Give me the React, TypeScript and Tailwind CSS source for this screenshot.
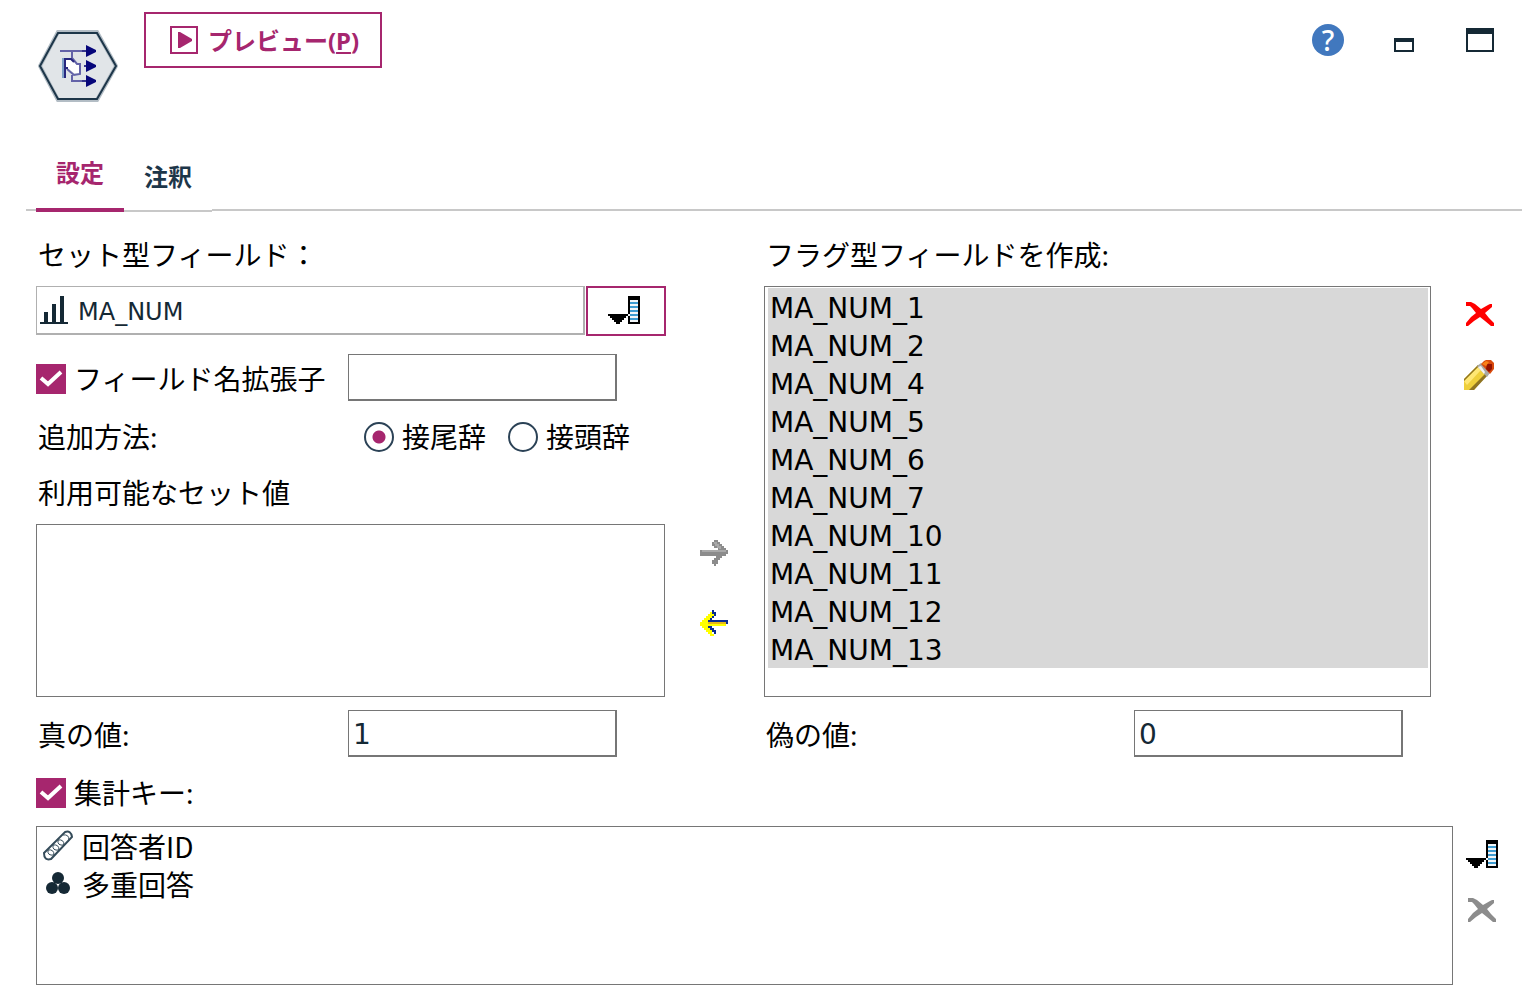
import { useState, type ReactNode } from "react";

const flagFields = [
  "MA_NUM_1",
  "MA_NUM_2",
  "MA_NUM_4",
  "MA_NUM_5",
  "MA_NUM_6",
  "MA_NUM_7",
  "MA_NUM_10",
  "MA_NUM_11",
  "MA_NUM_12",
  "MA_NUM_13",
];

function NodeIcon() {
  return (
    <svg width="80" height="72" viewBox="0 0 80 72" fill="none" aria-hidden="true">
      <path d="M20 2H59L78 36L59 70H20L2 36Z" fill="#e1e5e8" stroke="#b3bdc5" strokeWidth="4" />
      <path d="M20 3H59L78 36L59 69H20L2 36Z" stroke="#1d3649" strokeWidth="2" />
      <path d="M27 30H33L38 34H42V43H36L31 39H27Z" fill="#fff" />
      <path d="M22 21H47M34 22V28L39 34H42V44L36 45L29 39M34 45V51H48" stroke="#6363a8" strokeWidth="2" />
      <path d="M25 28V48" stroke="#7fa0c8" strokeWidth="2" />
      <path d="M27 28V48" stroke="#28287f" strokeWidth="2" />
      <path d="M26 29H33L36 32M27 38H30" stroke="#28287f" strokeWidth="2" />
      <path d="M46 36H52M44 21H50M44 51H50" stroke="#35358c" strokeWidth="2" />
      <path d="M48 15L58 20V22L48 27ZM48 30L58 35V37L48 42ZM48 45L58 50V52L48 57Z" fill="#06067a" />
    </svg>
  );
}

function FieldPickerIcon() {
  return (
    <svg width="32" height="28" viewBox="0 0 32 28" shapeRendering="crispEdges" aria-hidden="true">
      <path d="M0 18H20V20H18V22H16V24H14V26H12V28H8V26H6V24H4V22H2V20H0Z" fill="#000" />
      <path d="M20 0H32V28H20Z" fill="#000" />
      <path d="M22 4H30V26H22ZM18 20H20V18H22V20H20V22H18Z" fill="#f2f6f8" />
      <path d="M22 6H30V8H22ZM22 10H30V12H22ZM22 14H30V16H22ZM22 18H30V20H22ZM22 22H30V24H22Z" fill="#3c9bd0" />
    </svg>
  );
}

function CrossIcon({ color }: { color: string }) {
  return (
    <svg width="28" height="24" viewBox="0 0 28 24" aria-hidden="true">
      <path
        d="M0 0H5L9 2L15 7L22 3L24 2H26V5L19 11L23 16L28 21V24H25L19 19L14 15L8 19L2 24H0V21L5 15L10 11L6 6L4 4H0Z"
        fill={color}
      />
    </svg>
  );
}

function PencilIcon() {
  return (
    <svg width="30" height="30" viewBox="0 0 30 30" aria-hidden="true">
      <path d="M0 19L14 5L23 14L10 30H0Z" fill="#efcf3b" />
      <path d="M0 21L14 7L17 10L3 25Z" fill="#ffe774" />
      <path d="M0 19L14 5L15 6L0 21ZM10 30L24 15L22 13L5 30Z" fill="#8f7421" />
      <path d="M13 6L17 3L26 13L23 17Z" fill="#a9a9a5" />
      <path d="M14 7L17 6L21 12L20 14Z" fill="#f3f3f3" />
      <path d="M17 4L20 1L22 0H27L30 3V9L26 14Z" fill="#d84a0d" />
      <path d="M23 4L28 4L28 9L25 12L22 9Z" fill="#941200" />
      <path d="M18 4L22 1L25 2L22 6Z" fill="#f98219" />
    </svg>
  );
}

function RightArrowIcon() {
  return (
    <svg width="28" height="26" viewBox="0 0 28 26" shapeRendering="crispEdges" aria-hidden="true">
      <path
        d="M0 10H18V8H14V6H12V2H14V0H18V2H20V4H22V6H24V8H26V10H28V14H26V16H22V18H20V20H18V24H16V26H14V24H12V20H14V18H16V16H0Z"
        fill="#8c8c8c"
      />
      <path d="M2 11H26M14 3H16V5H18V7H20V9" stroke="#a9a9a9" strokeWidth="2" fill="none" />
    </svg>
  );
}

function LeftArrowIcon() {
  return (
    <svg width="28" height="26" viewBox="0 0 28 26" shapeRendering="crispEdges" aria-hidden="true">
      <path
        d="M0 12H2V10H4V8H6V6H8V4H10V2H12V4H14V6H12V8H10V10H8V12H26V16H8V18H10V20H12V24H14V26H10V24H8V22H6V20H4V18H2V16H0Z"
        fill="#ffff00"
      />
      <path
        d="M12 0H14V2H16V6H14V4H12ZM12 6H14V8H12ZM10 8H12V10H10ZM8 10H28V14H26V12H8ZM8 16H12V18H14V20H16V24H14V22H12V20H10V18H8Z"
        fill="#082b91"
      />
      <path d="M8 12H26V14H8Z" fill="#e7b718" />
    </svg>
  );
}

function Tick() {
  return (
    <svg className="pointer-events-none col-start-1 row-start-1" width="30" height="30" viewBox="0 0 30 30" aria-hidden="true">
      <path d="M5 14L12 20L25 8" fill="none" stroke="#fff" strokeWidth="4" />
    </svg>
  );
}

function CheckField({ children }: { children: ReactNode }) {
  const [checked, setChecked] = useState(true);
  return (
    <label className="flex items-center gap-2">
      <span className="grid">
        <input
          type="checkbox"
          checked={checked}
          onChange={() => setChecked(!checked)}
          className="col-start-1 row-start-1 size-[30px] appearance-none border-2 border-[#a6266e] bg-white checked:bg-[#a6266e]"
        />
        {checked && <Tick />}
      </span>
      {children}
    </label>
  );
}

function RadioField({ label, checked, onChange }: { label: string; checked: boolean; onChange: () => void }) {
  return (
    <label className="flex items-center gap-2">
      <input
        type="radio"
        name="affix"
        checked={checked}
        onChange={onChange}
        className="size-[30px] appearance-none rounded-full border-2 border-[#2b4256] bg-white checked:bg-[radial-gradient(circle,#a6266e_6px,#fff_7px)]"
      />
      {label}
    </label>
  );
}

const textBox =
  "h-[47px] w-[269px] border-t border-r-2 border-b-2 border-l border-[#767676] bg-white px-1 pt-[2px] font-['DejaVu_Sans',sans-serif] text-[#152935] outline-none";

export default function App() {
  const [affix, setAffix] = useState("suffix");
  return (
    <main className="bg-white pb-3 font-['Noto_Sans','Noto_Sans_CJK_JP',sans-serif] text-[28px] leading-[38px] text-black">
      <header className="flex h-[140px] items-start pt-3 pr-11 pl-[38px]">
        <div className="pt-[18px]">
          <NodeIcon />
        </div>
        <button className="ml-[26px] flex h-14 w-[238px] items-center justify-center gap-[10px] border-2 border-[#a6266e] pl-[3px] text-2xl font-bold text-[#a6266e]">
          <svg width="28" height="28" viewBox="0 0 28 28" aria-hidden="true">
            <path d="M1 1H27V27H1Z" fill="none" stroke="#a6266e" strokeWidth="2" />
            <path d="M8 6H10L22 13V15L10 22H8Z" fill="#a6266e" />
          </svg>
          <span className="pt-[2px]">
            プレビュー(<u className="underline-offset-2">P</u>)
          </span>
        </button>
        <div className="ml-auto flex items-center pt-3">
          <button aria-label="ヘルプ" className="size-8 rounded-full bg-[#4178be] text-center text-[28px] leading-[30px] font-medium text-white">
            ?
          </button>
          <button aria-label="最小化" className="ml-[50px] pt-[10px]">
            <span className="block h-[14px] w-5 border-2 border-t-4 border-[#152935]" />
          </button>
          <button aria-label="最大化" className="ml-[52px]">
            <span className="block h-6 w-7 border-2 border-t-[6px] border-[#152935]" />
          </button>
        </div>
      </header>

      <nav className="mr-4 ml-[26px] flex h-[72px] text-2xl font-bold" role="tablist">
        <span className="mb-[1px] w-[10px] border-b-2 border-[#c8c8c8]" />
        <button role="tab" aria-selected="true" className="w-[88px] border-b-4 border-[#a6266e] pb-[2px] text-[#a6266e]">
          設定
        </button>
        <button role="tab" aria-selected="false" className="w-[88px] border-b-2 border-[#c8c8c8] pt-1 text-[#1d3649]">
          注釈
        </button>
        <span className="mb-[1px] flex-1 border-b-2 border-[#c8c8c8]" />
      </nav>

      <div className="flex pt-6 pr-10 pl-9">
        <section className="w-[630px]">
          <h2 className="pl-[2px]">セット型フィールド：</h2>
          <div className="mt-3 flex h-[50px]">
            <div className="flex h-[49px] flex-1 items-center gap-[10px] border-t border-r-2 border-b-2 border-l border-[#b0b0b0] pl-[3px] text-2xl text-[#152935]">
              <svg width="28" height="28" viewBox="0 0 28 28" fill="#152935" aria-hidden="true">
                <path d="M0 26H28V28H0ZM4 16H8V26H4ZM12 8H16V26H12ZM20 0H24V26H20Z" />
              </svg>
              <span className="pt-1 font-['DejaVu_Sans',sans-serif]">MA_NUM</span>
            </div>
            <button aria-label="フィールドの選択" className="ml-[1px] flex w-20 items-center justify-center border-2 border-[#a6266e] pr-1 pb-[2px]">
              <FieldPickerIcon />
            </button>
          </div>
          <div className="mt-[18px] flex h-[47px] items-center justify-between pr-[49px]">
            <div className="pt-[2px]">
              <CheckField>フィールド名拡張子</CheckField>
            </div>
            <input aria-label="フィールド名拡張子" className={textBox} />
          </div>
          <div className="mt-4 flex h-10 items-center">
            <span className="w-[328px] pl-[2px]">追加方法:</span>
            <div className="flex gap-[22px]">
              <RadioField label="接尾辞" checked={affix === "suffix"} onChange={() => setAffix("suffix")} />
              <RadioField label="接頭辞" checked={affix === "prefix"} onChange={() => setAffix("prefix")} />
            </div>
          </div>
          <h2 className="mt-[17px] pl-[2px]">利用可能なセット値</h2>
          <div role="listbox" aria-label="利用可能なセット値" className="mt-3 mr-[1px] h-[173px] border border-[#767676]" />
          <label className="mt-[13px] flex items-center justify-between pr-[49px] pl-[2px]">
            <span className="pt-[2px]">真の値:</span>
            <input defaultValue="1" className={textBox} />
          </label>
        </section>

        <div className="flex w-[98px] flex-col items-center gap-11 pt-[304px] pr-[2px]">
          <button aria-label="追加">
            <RightArrowIcon />
          </button>
          <button aria-label="戻す">
            <LeftArrowIcon />
          </button>
        </div>

        <section className="flex-1">
          <h2 className="pl-[2px]">フラグ型フィールドを作成:</h2>
          <div className="mt-3 flex">
            <ul
              role="listbox"
              aria-label="フラグ型フィールド"
              className="h-[411px] flex-1 border border-[#767676] pt-[1px] pr-[2px] pl-[3px] font-['DejaVu_Sans',sans-serif] leading-[34px]"
            >
              {flagFields.map((name) => (
                <li key={name} role="option" aria-selected="true" className="bg-[#d8d8d8] pt-1 pl-[2px]">
                  {name}
                </li>
              ))}
            </ul>
            <div className="flex w-[67px] flex-col items-end gap-[34px] pt-4">
              <button aria-label="削除" className="pr-1">
                <CrossIcon color="#ff0000" />
              </button>
              <button aria-label="編集" className="pr-1">
                <PencilIcon />
              </button>
            </div>
          </div>
          <label className="mt-[13px] flex items-center justify-between pr-[95px] pl-[2px]">
            <span className="pt-[2px]">偽の値:</span>
            <input defaultValue="0" className={textBox} />
          </label>
        </section>
      </div>

      <section className="pt-[17px] pr-10 pl-9">
        <CheckField>集計キー:</CheckField>
        <div className="mt-[14px] flex">
          <ul
            role="listbox"
            aria-label="集計キー"
            className="h-[159px] flex-1 border border-[#767676] pl-[5px] font-['Noto_Sans_CJK_JP',sans-serif]"
          >
            <li role="option" aria-selected="false" className="flex items-center gap-2">
              <svg width="32" height="32" viewBox="0 0 32 32" fill="none" stroke="#344b59" strokeWidth="2" aria-hidden="true">
                <path d="M2 23L23 2Q29 0 30 7L9 29Q2 31 2 23Z" />
                <path
                  d="M6 20Q12 19 12 25M11 15Q17 14 17 20M16 10Q22 9 22 15M21 5Q27 4 27 10M6 20Q5 26 12 25M11 15Q10 21 17 20M16 10Q15 16 22 15"
                  strokeWidth="1"
                />
              </svg>
              回答者ID
            </li>
            <li role="option" aria-selected="false" className="flex items-center gap-2">
              <svg width="32" height="32" viewBox="0 0 32 32" fill="#152935" aria-hidden="true">
                <circle cx="16" cy="10" r="6" />
                <circle cx="10" cy="20" r="6" />
                <circle cx="22" cy="20" r="6" />
              </svg>
              多重回答
            </li>
          </ul>
          <div className="flex w-[45px] flex-col items-end gap-[30px] pt-[14px]">
            <button aria-label="キーの選択">
              <FieldPickerIcon />
            </button>
            <button aria-label="キーの削除" className="pr-[2px]">
              <CrossIcon color="#8c8c8c" />
            </button>
          </div>
        </div>
      </section>
    </main>
  );
}
